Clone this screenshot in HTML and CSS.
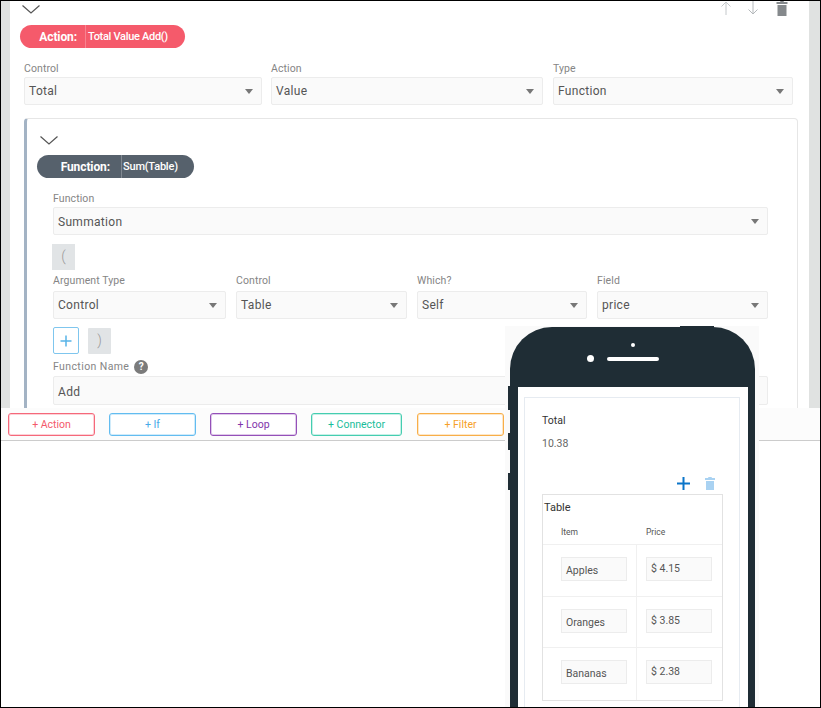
FILE: index.html
```html
<!DOCTYPE html>
<html lang="en">
<head>
<meta charset="utf-8">
<title>Action editor</title>
<link rel="stylesheet" href="styles.css">
</head>
<body>
<div class="frame">
  <div class="editor">
    <div class="panel">
      <div class="head-row">
        <svg class="chev" viewBox="0 0 18 9" width="18" height="9"><path d="M.5.5 9 8 17.500.5" fill="none" stroke="#555" stroke-width="1.200"/></svg>
        <div class="tools">
          <svg viewBox="0 0 12 16" width="12" height="16"><path d="M6 15V2M1.500 6.500 6 2l4.500 4.500" fill="none" stroke="#c4c8cb" stroke-width="1"/></svg>
          <svg viewBox="0 0 12 16" width="12" height="16"><path d="M6 1v13M1.500 9.500 6 14l4.500-4.500" fill="none" stroke="#b4b8bb" stroke-width="1"/></svg>
          <svg viewBox="0 0 12 16" width="12" height="16"><path d="M4.500 1h3l.5 1h3.500v2H.5V2H4zM1.500 5h9v11h-9z" fill="#85898c"/></svg>
        </div>
      </div>
      <div class="pill pill-action"><span class="pill-key">Action:</span><span class="pill-val">Total Value Add()</span></div>
      <div class="row row-action">
        <div class="field f-control"><label>Control</label><div class="select">Total<i class="caret"></i></div></div>
        <div class="field f-action"><label>Action</label><div class="select">Value<i class="caret"></i></div></div>
        <div class="field f-type"><label>Type</label><div class="select">Function<i class="caret"></i></div></div>
      </div>
      <div class="card">
        <svg class="chev chev-card" viewBox="0 0 18 9" width="18" height="9"><path d="M.5.5 9 8 17.500.5" fill="none" stroke="#555" stroke-width="1.200"/></svg>
        <div class="pill pill-func"><span class="pill-key">Function:</span><span class="pill-val">Sum(Table)</span></div>
        <div class="card-body">
          <div class="field field-func"><label>Function</label><div class="select">Summation<i class="caret"></i></div></div>
          <div class="paren paren-open">(</div>
          <div class="row row-args">
            <div class="field"><label>Argument Type</label><div class="select">Control<i class="caret"></i></div></div>
            <div class="field"><label>Control</label><div class="select">Table<i class="caret"></i></div></div>
            <div class="field"><label>Which?</label><div class="select">Self<i class="caret"></i></div></div>
            <div class="field"><label>Field</label><div class="select">price<i class="caret"></i></div></div>
          </div>
          <div class="arg-actions">
            <div class="add">
              <svg viewBox="0 0 12 12" width="12" height="12"><path d="M6 .5v11M.5 6h11" stroke="#58b4e8" stroke-width="1.500" fill="none"/></svg>
            </div>
            <div class="paren">)</div>
          </div>
          <div class="field field-name">
            <label>Function Name <span class="help">?</span></label>
            <div class="select">Add</div>
          </div>
        </div>
      </div>
    </div>
  </div>
  <div class="toolbar">
    <button class="tb tb-action">+ Action</button>
    <button class="tb tb-if">+ If</button>
    <button class="tb tb-loop">+ Loop</button>
    <button class="tb tb-connector">+ Connector</button>
    <button class="tb tb-filter">+ Filter</button>
  </div>

  <div class="phone-wrap">
    <div class="phone-btn phone-btn-top"></div>
    <div class="phone-btn phone-btn-a"></div>
    <div class="phone-btn phone-btn-b"></div>
    <div class="phone-btn phone-btn-c"></div>
    <div class="phone">
      <div class="phone-top">
        <span class="cam"></span>
        <span class="sensor"></span>
        <span class="speaker"></span>
      </div>
      <div class="screen">
        <div class="app">
          <div class="app-label">Total</div>
          <div class="app-value">10.38</div>
          <div class="app-tools">
            <svg viewBox="0 0 13 13" width="13" height="13"><path d="M6.500 0v13M0 6.500h13" stroke="#0b75c9" stroke-width="2" fill="none"/></svg>
            <svg viewBox="0 0 10 13" width="10" height="13"><path d="M3.500 0h3l.5 1h3v2H0V1h3zM1 4h8v9H1z" fill="#a9d2f2"/></svg>
          </div>
          <div class="tbl">
            <div class="tbl-title">Table</div>
            <div class="tbl-head"><span>Item</span><span>Price</span></div>
            <div class="tbl-row"><div class="cell"><div class="inp">Apples</div></div><div class="cell"><div class="inp inp-price">$ 4.15</div></div></div>
            <div class="tbl-row"><div class="cell"><div class="inp">Oranges</div></div><div class="cell"><div class="inp inp-price">$ 3.85</div></div></div>
            <div class="tbl-row"><div class="cell"><div class="inp">Bananas</div></div><div class="cell"><div class="inp inp-price">$ 2.38</div></div></div>
          </div>
        </div>
      </div>
    </div>
  </div>
</div>
</body>
</html>
```
FILE: styles.css
```css
* { box-sizing: border-box; }
html, body { margin: 0; padding: 0; background: #fff; }
body { font-family: Roboto, "Liberation Sans", sans-serif; color: #555; }

.frame {
  position: relative;
  width: 821px;
  height: 708px;
  border: 1px solid #000;
  overflow: hidden;
  background: #fff;
}

.editor {
  height: 407px;
  padding: 0 11px 0 8px;
  background: #fff;
  overflow: hidden;
  position: relative;
}
.editor::before, .editor::after {
  content: "";
  position: absolute;
  top: 0;
  bottom: 0;
  width: 9px;
  background: #e0e2e1;
}
.editor::before { left: 0; }
.editor::after { right: 0; width: 11px; }

.panel { height: 100%; padding: 4px 0 0 11px; }

.head-row { display: flex; justify-content: space-between; height: 20px; padding-left: 2px; }
.chev { display: block; }
.tools { display: flex; gap: 15px; margin: -5px 21px 0 0; }
.tools svg:last-child { margin-left: 2px; }

.pill {
  display: flex;
  align-items: center;
  height: 23px;
  border-radius: 12px;
  color: #fff;
  font-size: 12px;
  font-weight: 700;
}
.pill-key { display: flex; align-items: center; justify-content: flex-end; height: 100%; padding-right: 8px; letter-spacing: -.1px; border-right: 1px solid rgba(255,255,255,.25); }
.pill-val { padding-left: 1px; font-size: 11px; font-weight: 500; letter-spacing: -.2px; }
.pill-action { width: 165px; background: #f55a6b; }
.pill-action .pill-key { width: 66px; }
.pill-action .pill-val { padding-left: 2px; letter-spacing: -.3px; }
.pill-func { width: 157px; background: #56616c; margin-left: -2px; }
.pill-func .pill-key { width: 85px; padding-right: 11px; }

.row { display: flex; }
.row-action { margin: 14px 0 0 4px; width: 770px; gap: 9px; }
.f-control { width: 238px; }
.f-action { width: 272px; }
.f-type { width: 240px; margin-left: 1px; }

.field label {
  display: block;
  font-size: 10.500px;
  line-height: 13px;
  letter-spacing: .1px;
  color: #858585;
  height: 14px;
}
.row-action .field label { height: 15px; }
.select {
  position: relative;
  height: 28px;
  line-height: 26px;
  padding-left: 4px;
  font-size: 12px;
  letter-spacing: .3px;
  color: #555;
  background: #fafafa;
  border: 1px solid #ececec;
  border-radius: 2px;
}
.caret {
  position: absolute;
  right: 8px;
  top: 11px;
  border-left: 4px solid transparent;
  border-right: 4px solid transparent;
  border-top: 5px solid #777;
}

.card {
  margin: 13px 0 0 4px;
  width: 774px;
  height: 320px;
  border: 1px solid #e6e6e6;
  border-left: 3px solid #a3b3c4;
  border-radius: 4px;
  padding: 17px 0 0 12px;
}
.chev-card { margin-left: 1px; margin-bottom: 10px; }

.card-body { margin: 14px 0 0 14px; width: 715px; }
.field-func.field label { height: 15px; }
.field-func .select { line-height: 28px; }
.paren {
  width: 23px;
  height: 26px;
  background: #e1e4e6;
  color: #999;
  font-size: 14px;
  font-weight: 300;
  text-align: center;
  line-height: 25px;
}
.paren-open { margin: 9px 0 3px -1px; }
.row-args { gap: 10px; margin-top: 0; }
.row-args .field:nth-child(1) { width: 173px; }
.row-args .field:nth-child(2) { width: 171px; }
.row-args .field:nth-child(3) { width: 170px; }
.row-args .field:nth-child(4) { width: 171px; }
.row-args .field label { margin-top: 1px; height: 17px; }

.arg-actions { display: flex; align-items: center; gap: 9px; margin-top: 8px; }
.add {
  display: flex;
  align-items: center;
  justify-content: center;
  width: 26px;
  height: 27px;
  background: #fff;
  border: 1px solid #7fc6ee;
  border-radius: 2px;
}
.arg-actions .paren { border-radius: 1px; }
.field-name { margin-top: 3px; }
.field.field-name label { display: flex; align-items: center; gap: 5px; height: 19px; letter-spacing: .4px; }
.field-name .select { height: 29px; line-height: 30px; }
.help {
  display: inline-block;
  width: 14px;
  height: 14px;
  border-radius: 50%;
  background: #7b7b7b;
  color: #fff;
  font-size: 10px;
  font-weight: 700;
  line-height: 14px;
  text-align: center;
  letter-spacing: 0;
}

.toolbar {
  display: flex;
  height: 33px;
  padding: 5px 0 0 7px;
  background: #fcfcfc;
  border-bottom: 1px solid #ccc;
}
.tb {
  height: 23px;
  width: 87px;
  margin-right: 14px;
  padding: 1px 0 0;
  font: 400 10.500px/1 Roboto, "Liberation Sans", sans-serif;
  background: #fff;
  border: 1px solid;
  border-radius: 3px;
}
.tb-action { color: #f4596b; border-color: #f5687a; box-shadow: inset 0 0 0 1px rgba(245,104,122,.3); }
.tb-if { color: #48a9e8; border-color: #62bcf0; box-shadow: inset 0 0 0 1px rgba(98,188,240,.3); }
.tb-loop { color: #7f35ab; border-color: #9450b8; box-shadow: inset 0 0 0 1px rgba(148,80,184,.3); }
.tb-connector { width: 91px; color: #18bd9a; border-color: #45cdb0; box-shadow: inset 0 0 0 1px rgba(69,205,176,.3); margin-right: 15px; }
.tb-filter { width: 87px; color: #f6a028; border-color: #f8ae48; box-shadow: inset 0 0 0 1px rgba(248,174,72,.3); }

.phone-wrap {
  position: absolute;
  left: 504px;
  top: 325px;
  width: 254px;
  height: 382px;
  background: #fafafa;
  padding: 1px 4px 0 5px;
}
.phone {
  display: flex;
  flex-direction: column;
  height: 420px;
  background: #1f2d35;
  border-radius: 42px 42px 0 0;
}
.phone-btn { position: absolute; background: #1f2d35; }
.phone-btn-top { left: 175px; top: 0; width: 34px; height: 2px; }
.phone-btn-a { left: 3px; top: 60px; width: 2px; height: 24px; }
.phone-btn-b { left: 3px; top: 107px; width: 2px; height: 17px; }
.phone-btn-c { left: 3px; top: 147px; width: 2px; height: 17px; }

.phone-top { position: relative; height: 60px; flex: none; }
.cam {
  position: absolute; left: 77px; top: 28px;
  width: 7px; height: 7px; border-radius: 50%; background: #fff;
}
.sensor {
  position: absolute; left: 121px; top: 16px;
  width: 4px; height: 4px; border-radius: 50%; background: #fff;
}
.speaker {
  position: absolute; left: 97px; top: 30px;
  width: 52px; height: 4px; border-radius: 2px; background: #fff;
}
.screen {
  flex: 1;
  margin: 0 7px 0 8px;
  background: #fff;
  padding: 10px 8px 0 6px;
}
.app {
  height: 400px;
  border: 1px solid #e6ebf1;
  padding: 16px 15px 0 17px;
  color: #444;
  font-size: 10.500px;
}
.app-label { color: #333; line-height: 13px; }
.app-value { color: #666; line-height: 13px; margin-top: 10px; }
.app-tools { display: flex; justify-content: flex-end; align-items: center; gap: 15px; margin: 26px 9px 0 0; height: 15px; }
.tbl {
  margin-top: 3px;
  width: 181px;
  height: 207px;
  border: 1px solid #e2e2e2;
}
.tbl-title { padding: 6px 0 0 1px; color: #333; font-size: 11px; line-height: 13px; }
.tbl-head {
  display: grid;
  grid-template-columns: 85px 1fr;
  height: 31px;
  padding: 12px 0 0 18px;
  font-size: 8.500px;
  line-height: 13px;
  color: #555;
  border-bottom: 1px solid #f0f0f0;
}
.tbl-row {
  display: grid;
  grid-template-columns: 94px 1fr;
  height: 51.500px;
  border-bottom: 1px solid #f0f0f0;
}
.tbl-row:last-child { border-bottom: 0; }
.cell { padding: 12px 0 0 18px; }
.cell + .cell { border-left: 1px solid #f0f0f0; padding-left: 9px; margin-left: -1px; }
.inp {
  width: 66px;
  height: 24px;
  padding-left: 4px;
  background: #fafafa;
  border: 1px solid #ececec;
  font-size: 10.500px;
  line-height: 25px;
  color: #555;
}
.inp-price { line-height: 22px; }
```
